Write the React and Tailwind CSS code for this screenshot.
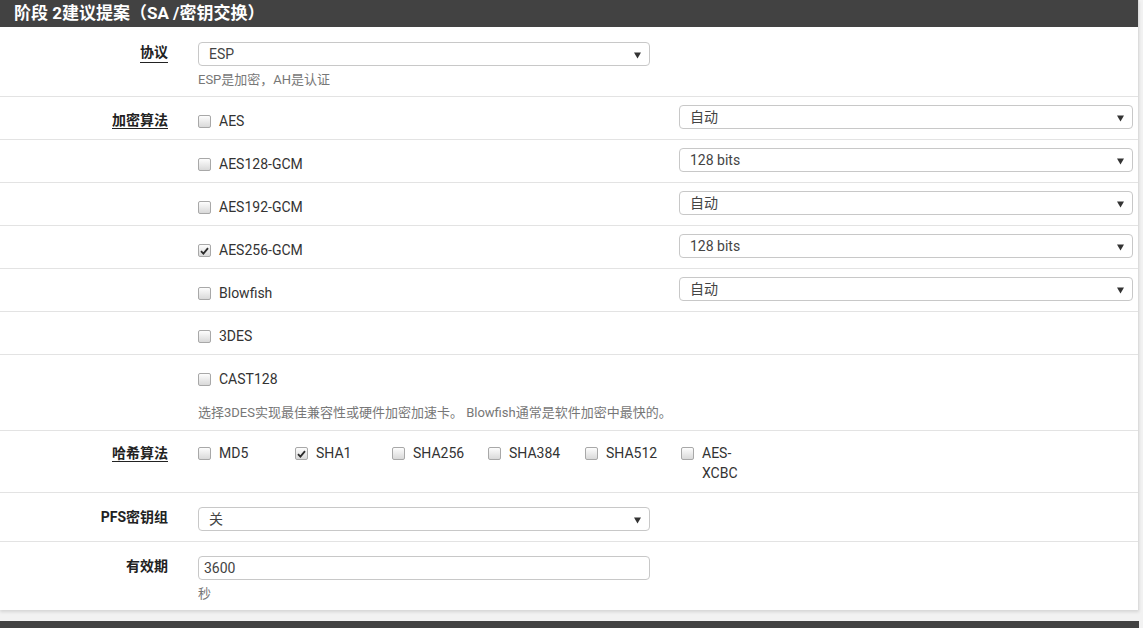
import React from "react";

const FONT = { fontFamily: 'Roboto, "Noto Sans CJK SC", "Liberation Sans", sans-serif' };

function Box({ checked }) {
  return (
    <span className="w-[13px] h-[13px] shrink-0 rounded-[2px] border border-[#a8a8a8] bg-linear-to-b from-[#fdfdfd] to-[#d9d9d9] flex items-center justify-center">
      {checked && (
        <svg width="9" height="8" viewBox="0 0 9 8">
          <path d="M1 4.2 L3.4 6.6 L8 1.2" fill="none" stroke="#2b2b2b" strokeWidth="1.8" />
        </svg>
      )}
    </span>
  );
}

function Check({ checked, label, className = "" }) {
  return (
    <div className={"flex items-start gap-[8px] " + className}>
      <span className="mt-[4px]"><Box checked={checked} /></span>
      <span className="text-[14px] leading-[20px] text-[#333]">{label}</span>
    </div>
  );
}

function Arrow() {
  return (
    <svg width="7" height="7" viewBox="0 0 7 7" className="absolute right-[8px] top-[9px]">
      <path d="M0 0.5 H7 L3.5 6.5 Z" fill="#333" />
    </svg>
  );
}

function Select({ value, w }) {
  return (
    <div
      className="relative h-[24px] rounded-[4px] border border-[#c8c8c8] bg-white flex items-center pl-[10px] text-[14px] text-[#444]"
      style={{ width: w }}
    >
      {value}
      <Arrow />
    </div>
  );
}

function Label({ children, u, className = "" }) {
  return (
    <div className={"w-[183px] shrink-0 pr-[15px] text-right " + className}>
      <span
        className={
          "text-[14px] font-bold text-[#222] leading-[20px] " +
          (u ? "border-b border-[#222]" : "")
        }
      >
        {children}
      </span>
    </div>
  );
}

function CryptoRow({ label, name, checked, sel, help, h = "h-[43px]" }) {
  return (
    <div className={"flex border-b border-[#e3e3e3] " + h}>
      <Label u={!!label} className="pt-[11px]">{label}</Label>
      <div className="pl-[15px] pt-[14px] w-[481px] shrink-0">
        <Check checked={checked} label={name} />
        {help && (
          <div className="mt-[15px] text-[13px] leading-[18px] text-[#777] whitespace-nowrap">
            {help}
          </div>
        )}
      </div>
      {sel && (
        <div className="pt-[8px] pl-[15px]">
          <Select value={sel} w={454} />
        </div>
      )}
    </div>
  );
}

export default function App() {
  return (
    <div className="w-[1143px] h-[628px] overflow-hidden bg-[#f2f2f2]" style={FONT}>
      <div className="w-[1139px] bg-white border-r border-[#dcdcdc] shadow-[0_2px_3px_rgba(0,0,0,0.12)]">
        <div className="h-[27px] bg-[#424242] pl-[14px] flex items-center text-white text-[17px] font-bold">
          阶段 2建议提案（SA /密钥交换）
        </div>

        {/* protocol */}
        <div className="flex h-[70px] border-b border-[#e3e3e3] pt-[15px]">
          <Label u>
            <span className="relative top-[-2px]">协议</span>
          </Label>
          <div className="pl-[15px]">
            <Select value="ESP" w={452} />
            <div className="mt-[5px] text-[13px] leading-[18px] text-[#777]">ESP是加密，AH是认证</div>
          </div>
        </div>

        <CryptoRow label="加密算法" name="AES" sel="自动" />
        <CryptoRow name="AES128-GCM" sel="128 bits" />
        <CryptoRow name="AES192-GCM" sel="自动" />
        <CryptoRow name="AES256-GCM" checked sel="128 bits" />
        <CryptoRow name="Blowfish" sel="自动" />
        <CryptoRow name="3DES" />
        <CryptoRow
          name="CAST128"
          h="h-[76px]"
          help="选择3DES实现最佳兼容性或硬件加密加速卡。 Blowfish通常是软件加密中最快的。"
        />

        {/* hash */}
        <div className="flex h-[62px] border-b border-[#e3e3e3] pt-[12px]">
          <Label u className="-mt-[2px]">哈希算法</Label>
          <div className="pl-[15px] flex">
            <Check label="MD5" className="w-[97px]" />
            <Check label="SHA1" checked className="w-[97px]" />
            <Check label="SHA256" className="w-[96px]" />
            <Check label="SHA384" className="w-[97px]" />
            <Check label="SHA512" className="w-[96px]" />
            <Check
              label={<>AES-<br />XCBC</>}
              className="w-[97px]"
            />
          </div>
        </div>

        {/* PFS */}
        <div className="flex h-[49px] border-b border-[#e3e3e3] pt-[14px]">
          <Label className="-mt-[2px]">PFS密钥组</Label>
          <div className="pl-[15px]">
            <Select value="关" w={452} />
          </div>
        </div>

        {/* lifetime */}
        <div className="flex h-[68px] pt-[14px]">
          <Label className="-mt-[2px]">有效期</Label>
          <div className="pl-[15px]">
            <div className="h-[24px] w-[452px] rounded-[4px] border border-[#c8c8c8] flex items-center pl-[5px] text-[14px] text-[#444]">
              3600
            </div>
            <div className="mt-[5px] text-[13px] leading-[18px] text-[#777]">秒</div>
          </div>
        </div>
      </div>
      <div className="mt-[11px] h-[10px] w-[1139px] bg-[#424242]" />
    </div>
  );
}
